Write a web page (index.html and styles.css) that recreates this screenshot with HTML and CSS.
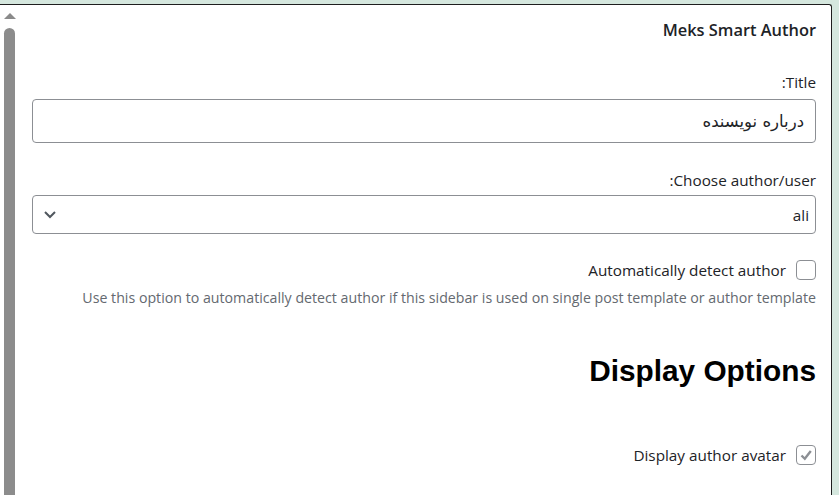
FILE: index.html
```html
<!DOCTYPE html>
<html lang="en">
<head>
<meta charset="utf-8">
<title>Meks Smart Author</title>
<link rel="stylesheet" href="styles.css">
</head>
<body>
<div class="frame">
  <div class="scrollbar">
    <div class="scroll-arrow"></div>
    <div class="scroll-thumb"></div>
  </div>
  <div class="content" dir="rtl">
    <h3 class="widget-title">Meks Smart Author</h3>

    <label class="field-label">Title:</label>
    <div class="text-input"><span class="fa-text">درباره نویسنده</span></div>

    <label class="field-label label-select">Choose author/user:</label>
    <div class="select-box">
      <span class="select-value">ali</span>
      <svg class="chevron" width="14" height="9" viewBox="0 0 14 9"><path d="M2 2 L7 7 L12 2" fill="none" stroke="#50575e" stroke-width="2"/></svg>
    </div>

    <div class="check-row row-auto">
      <span class="checkbox"></span>
      <span class="check-label">Automatically detect author</span>
    </div>
    <p class="description">Use this option to automatically detect author if this sidebar is used on single post template or author template</p>

    <h2 class="section-title">Display Options</h2>

    <div class="check-row row-avatar">
      <span class="checkbox checked">
        <svg width="16" height="16" viewBox="0 0 16 16"><path d="M3.5 8.5 L6.8 11.8 L12.8 4" fill="none" stroke="#8c8f94" stroke-width="2.4"/></svg>
      </span>
      <span class="check-label">Display author avatar</span>
    </div>
    <label class="field-label label-next">Avatar size:</label>
  </div>
</div>
</body>
</html>
```
FILE: styles.css
```css
html, body {
  margin: 0;
  padding: 0;
  height: 100%;
  overflow: hidden;
}
body {
  background: #d5e7de;
  font-family: "Open Sans", "DejaVu Sans", sans-serif;
  color: #1d2327;
  font-size: 15.3px;
}
.frame {
  margin-top: 4px;
  width: 831px;
  height: 600px;
  background: #fff;
  border-top: 1px solid #1e1e1e;
  border-right: 1px solid #1e1e1e;
  border-top-right-radius: 3px;
  display: flex;
}
.scrollbar {
  width: 11px;
  margin-left: 4px;
  display: flex;
  flex-direction: column;
  align-items: center;
}
.scroll-arrow {
  margin-top: 8px;
  width: 0;
  height: 0;
  border-left: 6px solid transparent;
  border-right: 6px solid transparent;
  border-bottom: 6px solid #8a8a8a;
}
.scroll-thumb {
  margin-top: 9px;
  width: 11px;
  flex: 1;
  background: #8c8c8c;
  border-radius: 6px 6px 0 0;
}
.content {
  flex: 1;
  padding: 0 15px 0 17px;
  display: flex;
  flex-direction: column;
  align-items: stretch;
}
.widget-title {
  margin: 13px 0 0;
  font-size: 16.4px;
  font-weight: 600;
  line-height: 24px;
}
.field-label {
  display: block;
  margin-top: 30px;
  line-height: 20px;
}
.label-select {
  margin-top: 27px;
}
.text-input {
  margin-top: 7px;
  height: 42px;
  border: 1px solid #8c8f94;
  border-radius: 4px;
  padding: 0 11px;
  display: flex;
  align-items: center;
}
.fa-text {
  font-family: "DejaVu Sans", sans-serif;
  font-size: 16.5px;
}
.select-box {
  margin-top: 5px;
  height: 37px;
  border: 1px solid #8c8f94;
  border-radius: 4px;
  padding: 0 6px 0 10px;
  display: flex;
  align-items: center;
  justify-content: space-between;
}
.check-row {
  display: flex;
  align-items: center;
  gap: 10px;
}
.row-auto {
  margin-top: 26px;
}
.checkbox {
  width: 18px;
  height: 18px;
  border: 1px solid #8c8f94;
  border-radius: 4px;
  display: flex;
  align-items: center;
  justify-content: center;
  flex: none;
}
.check-label {
  line-height: 20px;
}
.description {
  margin: 8px 0 0;
  color: #646970;
  line-height: 20px;
  font-size: 14.2px;
}
.section-title {
  margin: 46px 0 0;
  font-family: "Liberation Sans", Arial, sans-serif;
  font-weight: 700;
  font-size: 29.8px;
  line-height: 34px;
  color: #000;
}
.row-avatar {
  margin-top: 57px;
}
.label-next {
  margin-top: 25px;
}
```
